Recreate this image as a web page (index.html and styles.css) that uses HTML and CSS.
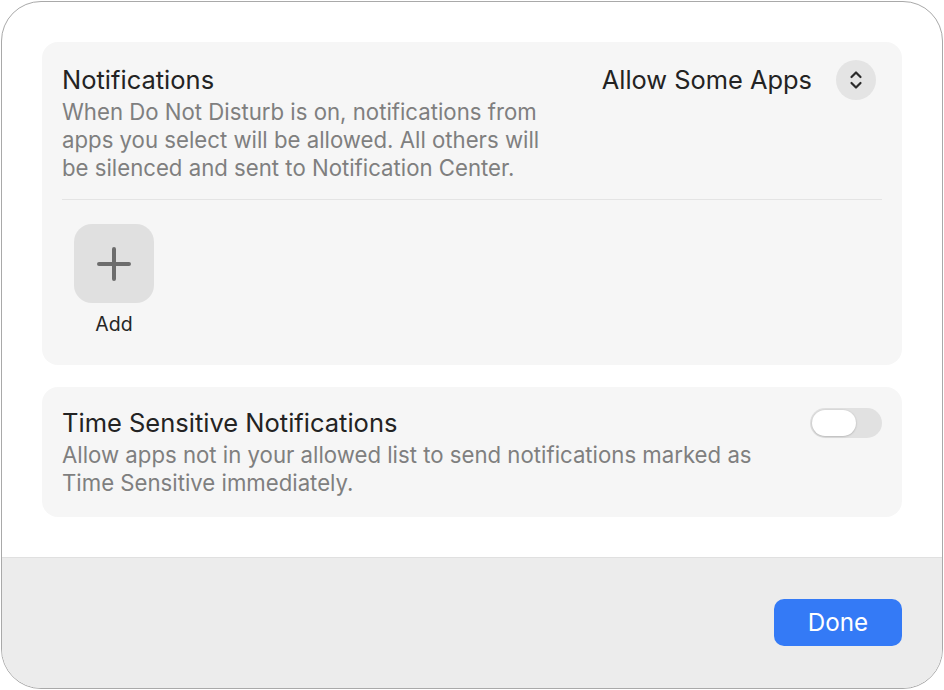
FILE: index.html
```html
<!DOCTYPE html>
<html>
<head>
<meta charset="utf-8">
<link rel="stylesheet" href="styles.css">
</head>
<body>
<div class="window">
  <div class="content">
    <section class="card card-apps">
      <div class="card-head">
        <div class="head-text">
          <div class="title">Notifications</div>
          <div class="desc">When Do Not Disturb is on, notifications from apps you select will be allowed. All others will be silenced and sent to Notification Center.</div>
        </div>
        <div class="popup">
          <span class="popup-label">Allow Some Apps</span>
          <span class="stepper">
            <svg width="16" height="22" viewBox="0 0 16 22"><path d="M3.5 8 L8 3.5 L12.5 8 M3.5 14 L8 18.5 L12.5 14" fill="none" stroke="#2a2a2a" stroke-width="2.2" stroke-linecap="round" stroke-linejoin="round"/></svg>
          </span>
        </div>
      </div>
      <div class="divider"></div>
      <div class="apps">
        <div class="app-item">
          <div class="add-tile">
            <svg width="36" height="36" viewBox="0 0 36 36"><path d="M18 3 V33 M3 18 H33" stroke="#6d6d6d" stroke-width="4" stroke-linecap="round"/></svg>
          </div>
          <div class="app-label">Add</div>
        </div>
      </div>
    </section>
    <section class="card card-ts">
      <div class="head-text">
        <div class="title">Time Sensitive Notifications</div>
        <div class="desc">Allow apps not in your allowed list to send notifications marked as Time Sensitive immediately.</div>
      </div>
      <div class="toggle"><div class="knob"></div></div>
    </section>
  </div>
  <div class="footer">
    <button class="done">Done</button>
  </div>
</div>
</body>
</html>
```
FILE: styles.css
```css
* { box-sizing: border-box; }
html, body { margin: 0; padding: 0; background: #fff; }
body {
  padding: 1px;
  font-family: Inter, "Noto Sans", sans-serif;
  color: #262626;
}
.window {
  width: 942px;
  height: 688px;
  border: 1px solid #a9a9a9;
  border-radius: 40px;
  overflow: hidden;
  display: flex;
  flex-direction: column;
  background: #fff;
}
.content {
  flex: 1;
  padding: 40px 40px 0 40px;
  display: flex;
  flex-direction: column;
  gap: 22px;
}
.card {
  background: #f6f6f6;
  border-radius: 16px;
  padding: 0 20px;
}
.card-head {
  display: flex;
  justify-content: space-between;
  align-items: flex-start;
  padding: 23px 0 17px;
}
.head-text { width: 490px; }
.card-ts .head-text { width: 700px; }
.title {
  font-size: 25.5px;
  line-height: 30px;
  margin-bottom: 3px;
  color: #232323;
}
.desc {
  font-size: 22.2px;
  line-height: 28px;
  color: #7f7f7f;
}
.popup {
  display: flex;
  align-items: center;
  gap: 24px;
  margin-top: -5px;
  margin-right: 6px;
}
.popup-label {
  font-size: 25.4px;
  line-height: 30px;
  color: #232323;
}
.stepper {
  width: 40px;
  height: 40px;
  border-radius: 50%;
  background: #e4e4e4;
  display: flex;
  align-items: center;
  justify-content: center;
}
.divider {
  height: 1px;
  background: #e4e4e4;
}
.apps {
  padding: 24px 0 30px;
  display: flex;
}
.app-item {
  width: 104px;
  display: flex;
  flex-direction: column;
  align-items: center;
}
.add-tile {
  width: 80px;
  height: 79px;
  border-radius: 18px;
  background: #e0e0e0;
  display: flex;
  align-items: center;
  justify-content: center;
}
.app-label {
  margin-top: 10px;
  font-size: 19.5px;
  line-height: 22px;
  color: #262626;
}
.card-ts {
  display: flex;
  justify-content: space-between;
  align-items: flex-start;
  padding-top: 21px;
  padding-bottom: 20px;
}
.toggle {
  width: 72px;
  height: 30px;
  border-radius: 15px;
  background: #e1e1e1;
  padding: 2px;
}
.knob {
  width: 44px;
  height: 26px;
  border-radius: 13px;
  background: #fff;
  box-shadow: 0 0.5px 2px rgba(0,0,0,0.25);
}
.footer {
  height: 131px;
  border-top: 1px solid #e0e0e0;
  background: #ececec;
  display: flex;
  justify-content: flex-end;
  align-items: flex-start;
  padding: 41px 40px 0 0;
}
.done {
  width: 128px;
  height: 47px;
  border: none;
  border-radius: 10px;
  background: #347af6;
  color: #fff;
  font-family: Inter, "Noto Sans", sans-serif;
  font-size: 24.2px;
  padding: 0;
}
```
